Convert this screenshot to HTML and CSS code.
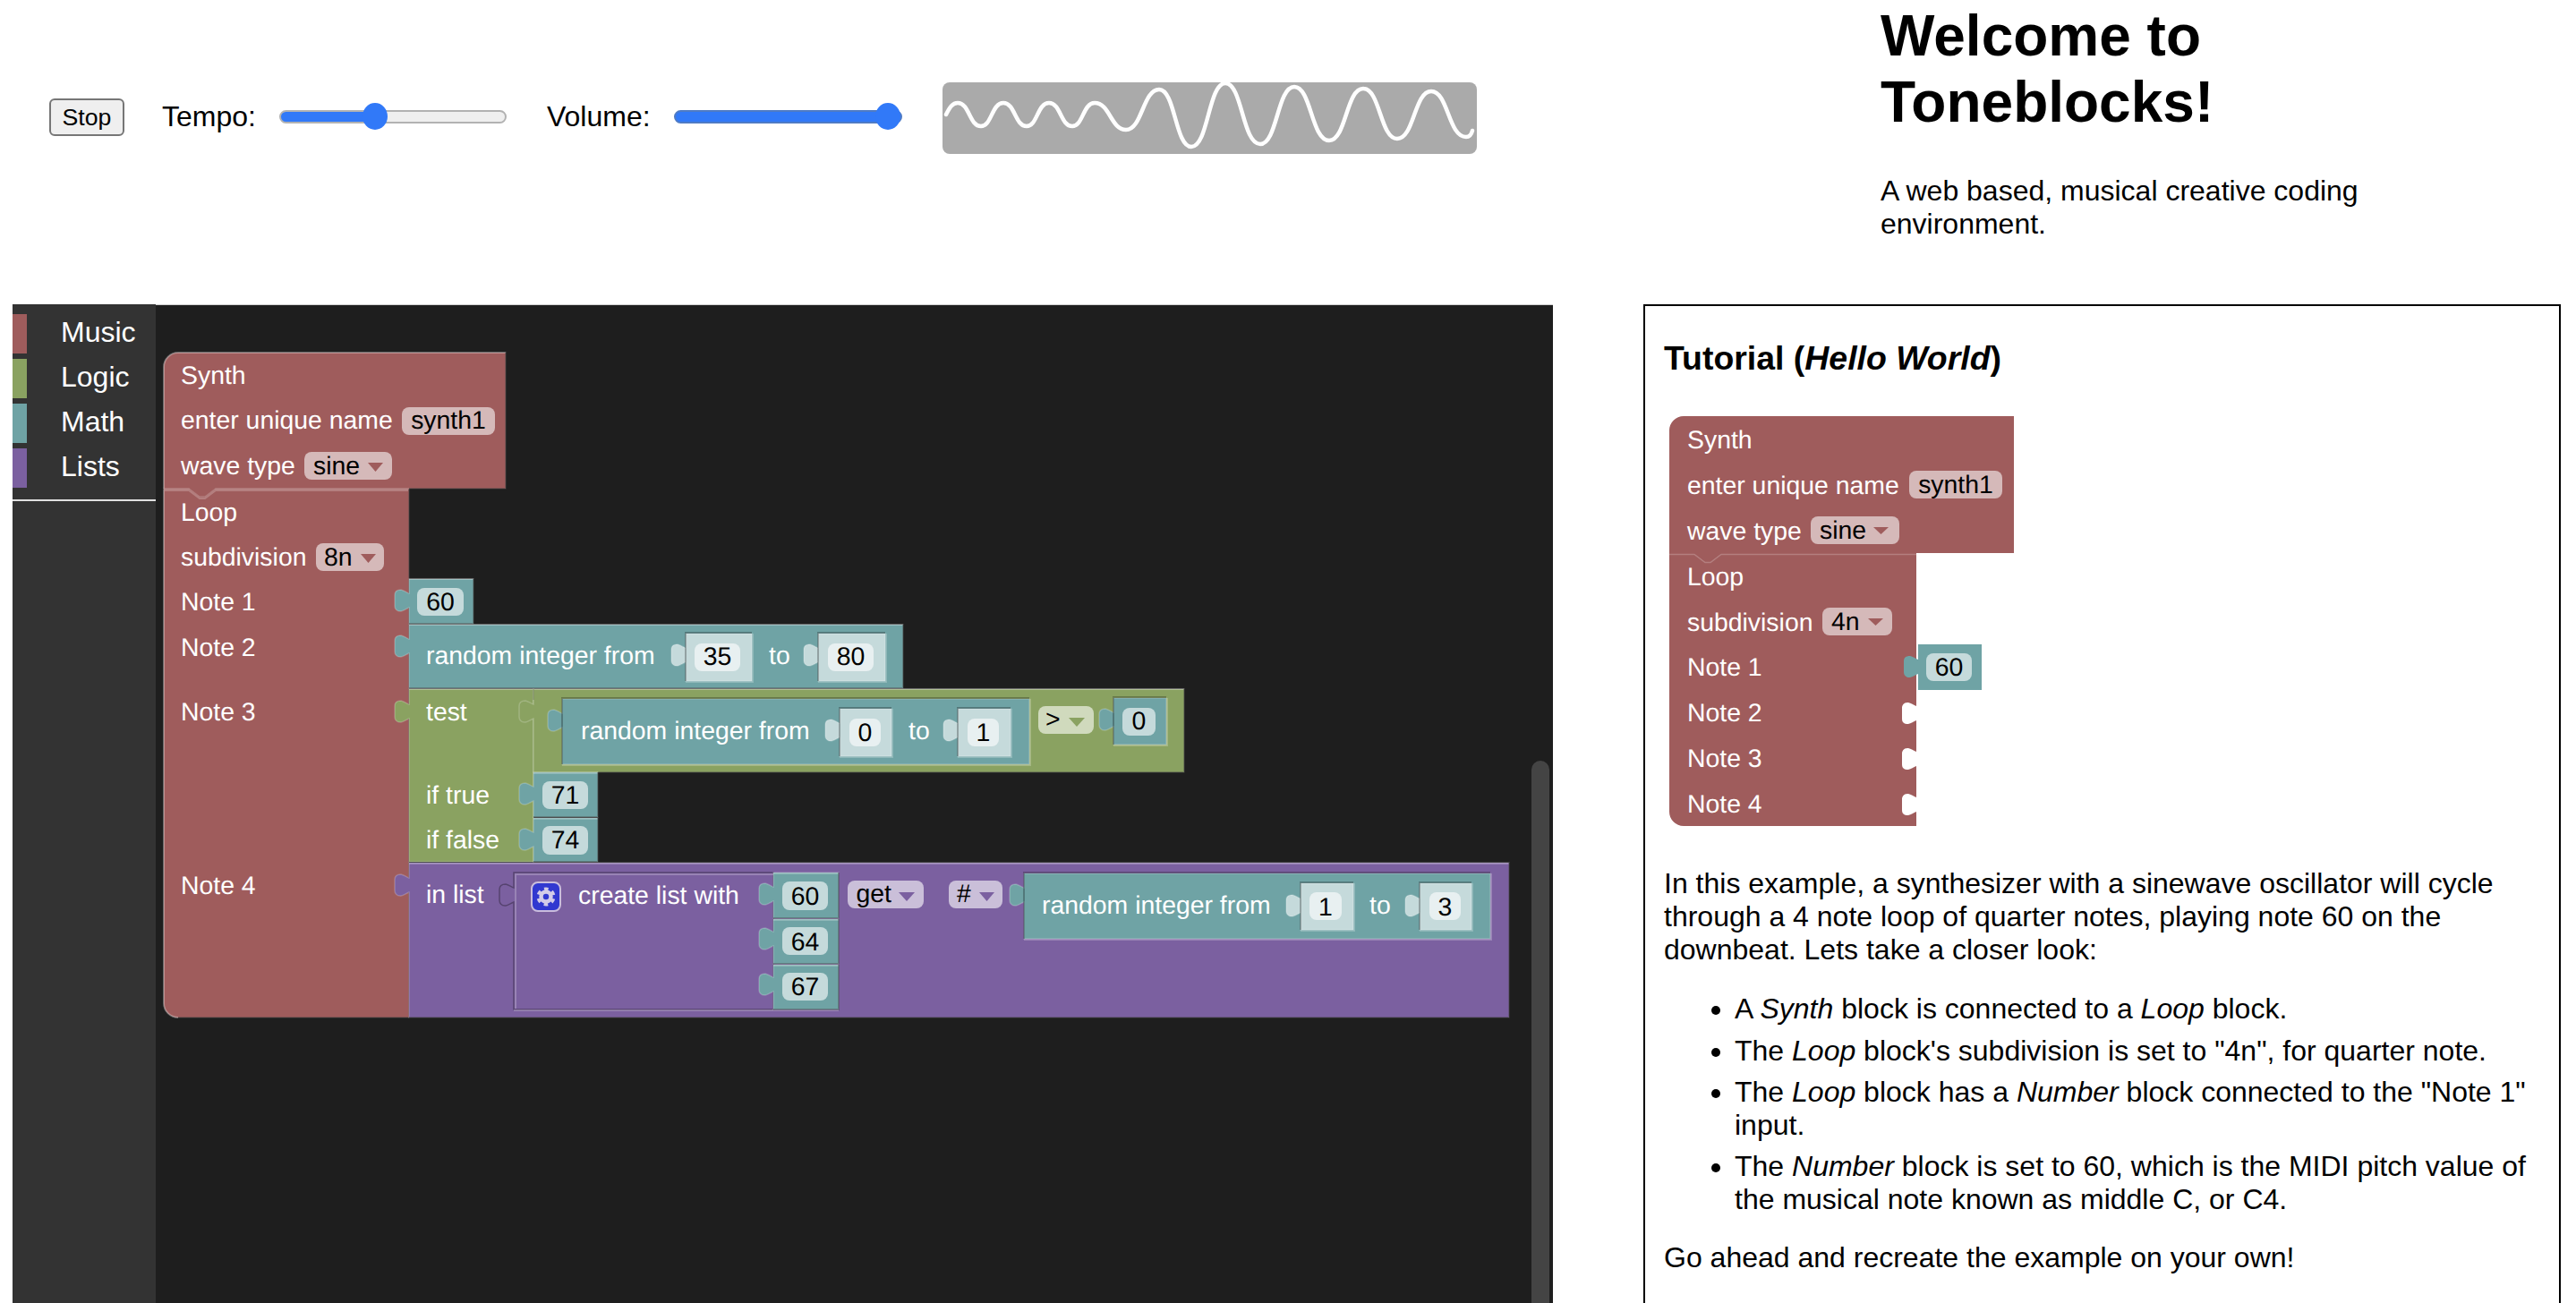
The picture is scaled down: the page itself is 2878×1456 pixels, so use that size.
FILE: index.html
```html
<!DOCTYPE html>
<html lang="en">
<head>
<meta charset="utf-8">
<title>Toneblocks</title>
<link rel="stylesheet" href="styles.css">
</head>
<body>
<div class="page">
  <header class="controls">
    <button class="stop">Stop</button>
    <div class="ctl">
      <label class="ctl-label">Tempo:</label>
      <input class="slider tempo" type="range" min="0" max="100" value="41">
    </div>
    <div class="ctl ctl-volume">
      <label class="ctl-label">Volume:</label>
      <input class="slider volume" type="range" min="0" max="100" value="100">
    </div>
    <svg class="scope" viewBox="1055 92 597 80">
      <path d="M1059,128 C1063,120 1066,115 1072,115 C1085,115 1085,141 1098,141 C1110,141 1110,115 1123,115 C1136,115 1136,141 1149,141 C1161,141 1161,115 1174,115 C1187,115 1187,141 1200,141 C1212,141 1212,115 1225,115 C1242,115 1243,145 1260,145 C1278,145 1279,100 1297,100 C1315,100 1315,164 1333,164 C1352,164 1352,93 1371,93 C1390,93 1390,161 1410,161 C1429,161 1429,97 1448,97 C1467,97 1467,157 1487,157 C1506,157 1506,99 1525,99 C1544,99 1544,155 1563,155 C1582,155 1582,102 1601,102 C1620,102 1620,153 1640,153 C1644,153 1646,150 1647,146"/>
    </svg>
  </header>

  <aside class="intro">
    <h1 class="intro-title">Welcome to Toneblocks!</h1>
    <p class="intro-text">A web based, musical creative coding environment.</p>
  </aside>

  <main class="workspace">
    <nav class="toolbox">
      <div class="cats">
        <div class="cat"><span class="stripe s-music"></span><span class="cat-name">Music</span></div>
        <div class="cat"><span class="stripe s-logic"></span><span class="cat-name">Logic</span></div>
        <div class="cat"><span class="stripe s-math"></span><span class="cat-name">Math</span></div>
        <div class="cat"><span class="stripe s-lists"></span><span class="cat-name">Lists</span></div>
      </div>
    </nav>
    <div class="canvas">
      <svg class="blocks" viewBox="174 340 1561 1116">
        <!-- Loop -->
        <path class="b music" d="M183,546 H457 V1137 H199 a16,16 0 0 1 -16,-16 Z"/>
        <path class="dk" d="M457,546 V1137 H199"/>
        <!-- Synth -->
        <path class="b music" d="M183,410 a16,16 0 0 1 16,-16 H565 V546 H241 l-12,9 h-6 l-12,-9 H183 Z"/>
        <path class="lt" d="M183,546 V410 a16,16 0 0 1 16,-16 H565"/>
        <path class="dk" d="M565,394 V546 H457"/>
        <path class="lt" d="M183,1121 V548 H211 l12,9 h6 l12,-9 H456"/>
        <path class="lt" d="M183,1121 a16,16 0 0 0 16,16" />
        <text class="bt" x="202" y="429">Synth</text>
        <text class="bt" x="202" y="479">enter unique name</text>
        <rect class="f-music" x="449" y="455" width="104" height="31" rx="8"/>
        <text class="ft mid" x="501" y="479">synth1</text>
        <text class="bt" x="202" y="530">wave type</text>
        <rect class="f-music" x="340" y="505" width="98" height="31" rx="8"/>
        <text class="ft" x="350" y="530">sine</text>
        <path class="arrow-music" d="M411,517 h17 l-8.500,10 Z"/>
        <text class="bt" x="202" y="582">Loop</text>
        <text class="bt" x="202" y="632">subdivision</text>
        <rect class="f-music" x="353" y="607" width="76" height="31" rx="8"/>
        <text class="ft" x="362" y="632">8n</text>
        <path class="arrow-music" d="M403,619 h17 l-8.500,10 Z"/>
        <text class="bt" x="202" y="682">Note 1</text>
        <text class="bt" x="202" y="733">Note 2</text>
        <text class="bt" x="202" y="805">Note 3</text>
        <text class="bt" x="202" y="999">Note 4</text>

        <!-- 60 -->
        <path class="b math" d="M457,647 H529 V697 H457 V679 c-3,1 -6,3.500 -9,4 c-5,.5 -7,-3 -7,-6 v-12 c0,-4 2,-6 7,-6 c3,.5 6,3 9,4 Z"/>
        <path class="lt" d="M457,647 H529"/><path class="dk" d="M529,647 V697 H457"/>
        <rect class="f-math" x="466" y="657" width="52" height="31" rx="8"/>
        <text class="ft mid" x="492" y="682">60</text>

        <!-- random 35..80 -->
        <path class="b math" d="M457,698 H1009 V769 H457 V730 c-3,1 -6,3.500 -9,4 c-5,.5 -7,-3 -7,-6 v-12 c0,-4 2,-6 7,-6 c3,.5 6,3 9,4 Z"/>
        <path class="lt" d="M457,698 H1009"/><path class="dk" d="M1009,698 V769 H457"/>
        <text class="bt" x="476" y="742">random integer from</text>
        <text class="bt" x="859" y="742">to</text>
        <path class="b shadow" d="M766,708 H840 V761 H766 V740 c-3,1 -6,3.500 -9,4 c-5,.5 -7,-3 -7,-6 v-12 c0,-4 2,-6 7,-6 c3,.5 6,3 9,4 Z"/>
        <path class="rim" d="M841,708 V762 H766"/><path class="hole" d="M766,761 V707 H840"/>
        <rect class="f-shadow" x="776" y="719" width="51" height="31" rx="8"/>
        <text class="ft mid" x="801.500" y="743">35</text>
        <path class="b shadow" d="M914,708 H989 V761 H914 V740 c-3,1 -6,3.500 -9,4 c-5,.5 -7,-3 -7,-6 v-12 c0,-4 2,-6 7,-6 c3,.5 6,3 9,4 Z"/>
        <path class="rim" d="M990,708 V762 H914"/><path class="hole" d="M914,761 V707 H989"/>
        <rect class="f-shadow" x="925" y="719" width="51" height="31" rx="8"/>
        <text class="ft mid" x="950.500" y="743">80</text>

        <!-- ternary -->
        <path class="b logic" d="M457,770 H596 V963 H457 V803 c-3,1 -6,3.500 -9,4 c-5,.5 -7,-3 -7,-6 v-12 c0,-4 2,-6 7,-6 c3,.5 6,3 9,4 Z"/>
        <path class="lt" d="M457,770 H596"/><path class="dk" d="M457,964 H596"/>
        <text class="bt" x="476" y="805">test</text>
        <text class="bt" x="476" y="898">if true</text>
        <text class="bt" x="476" y="948">if false</text>
        <!-- compare -->
        <path class="b logic" d="M596,770 H1323 V863 H596 V803 c-3,1 -6,3.500 -9,4 c-5,.5 -7,-3 -7,-6 v-12 c0,-4 2,-6 7,-6 c3,.5 6,3 9,4 Z"/>
        <path class="lt" d="M596,770 H1323"/><path class="dk" d="M1323,770 V863 H668"/>
        <path class="dk thin" d="M596,770 V782"/>
        <!-- random 0..1 -->
        <path class="b math" d="M628,781 H1150 V854 H628 V813 c-3,1 -6,3.500 -9,4 c-5,.5 -7,-3 -7,-6 v-12 c0,-4 2,-6 7,-6 c3,.5 6,3 9,4 Z"/>
        <path class="rim" d="M1151,781 V855 H628"/><path class="hole" d="M628,854 V780 H1150"/>
        <text class="bt" x="649" y="826">random integer from</text>
        <text class="bt" x="1015" y="826">to</text>
        <path class="b shadow" d="M938,792 H996 V845 H938 V824 c-3,1 -6,3.500 -9,4 c-5,.5 -7,-3 -7,-6 v-12 c0,-4 2,-6 7,-6 c3,.5 6,3 9,4 Z"/>
        <path class="rim" d="M997,792 V846 H938"/><path class="hole" d="M938,845 V791 H996"/>
        <rect class="f-shadow" x="949" y="803" width="35" height="31" rx="8"/>
        <text class="ft mid" x="966.500" y="828">0</text>
        <path class="b shadow" d="M1070,792 H1129 V845 H1070 V824 c-3,1 -6,3.500 -9,4 c-5,.5 -7,-3 -7,-6 v-12 c0,-4 2,-6 7,-6 c3,.5 6,3 9,4 Z"/>
        <path class="rim" d="M1130,792 V846 H1070"/><path class="hole" d="M1070,845 V791 H1129"/>
        <rect class="f-shadow" x="1081" y="803" width="35" height="31" rx="8"/>
        <text class="ft mid" x="1098.500" y="828">1</text>
        <!-- > -->
        <rect class="f-logic" x="1160" y="789" width="62" height="31" rx="8"/>
        <text class="ft" x="1168" y="813">&gt;</text>
        <path class="arrow-logic" d="M1194,802 h18 l-9,10 Z"/>
        <path class="b math" d="M1244,780 H1303 V832 H1244 V812 c-3,1 -6,3.500 -9,4 c-5,.5 -7,-3 -7,-6 v-12 c0,-4 2,-6 7,-6 c3,.5 6,3 9,4 Z"/>
        <path class="rim" d="M1304,780 V833 H1244"/><path class="hole" d="M1244,832 V779 H1303"/>
        <rect class="f-math" x="1254" y="791" width="37" height="31" rx="8"/>
        <text class="ft mid" x="1272.500" y="815">0</text>
        <!-- 71 / 74 -->
        <path class="b math" d="M596,863 H668 V913 H596 V895 c-3,1 -6,3.500 -9,4 c-5,.5 -7,-3 -7,-6 v-12 c0,-4 2,-6 7,-6 c3,.5 6,3 9,4 Z"/>
        <path class="lt" d="M596,864 H668"/><path class="dk" d="M668,863 V913 H596"/>
        <rect class="f-math" x="606" y="873" width="51" height="31" rx="8"/>
        <text class="ft mid" x="631.500" y="898">71</text>
        <path class="b math" d="M596,914 H668 V963 H596 V946 c-3,1 -6,3.500 -9,4 c-5,.5 -7,-3 -7,-6 v-12 c0,-4 2,-6 7,-6 c3,.5 6,3 9,4 Z"/>
        <path class="lt" d="M596,915 H668"/><path class="dk" d="M668,914 V963 H596"/>
        <rect class="f-math" x="606" y="923" width="51" height="32" rx="8"/>
        <text class="ft mid" x="631.500" y="948">74</text>

        <!-- get in list -->
        <path class="b lists" d="M457,964 H1686 V1137 H457 V997 c-3,1 -6,3.500 -9,4 c-5,.5 -7,-3 -7,-6 v-12 c0,-4 2,-6 7,-6 c3,.5 6,3 9,4 Z"/>
        <path class="lt" d="M457,965 H1686"/><path class="dk" d="M1686,964 V1137 H457"/>
        <text class="bt" x="476" y="1009">in list</text>
        <!-- create list -->
        <path class="b-hole lists" d="M574,975 H864 V1128 H574 V1008 c-3,1 -6,3.500 -9,4 c-5,.5 -7,-3 -7,-6 v-12 c0,-4 2,-6 7,-6 c3,.5 6,3 9,4 Z"/>
        <path class="rim" d="M574,1129 H937"/><path class="rim" d="M576,1127 V977 H864"/>
        <rect class="gear-box" x="594" y="986" width="32" height="32" rx="7"/>
        <circle class="gear-ring" cx="610" cy="1002" r="5.500"/>
        <circle class="gear-teeth" cx="610" cy="1002" r="8.500"/>
        <text class="bt" x="646" y="1010">create list with</text>
        <!-- 60 64 67 -->
        <path class="b math" d="M864,975 H937 V1026 H864 V1007 c-3,1 -6,3.500 -9,4 c-5,.5 -7,-3 -7,-6 v-12 c0,-4 2,-6 7,-6 c3,.5 6,3 9,4 Z"/>
        <path class="lt" d="M864,976 H937"/><path class="dk" d="M937,975 V1026 H864"/>
        <rect class="f-math" x="874" y="985" width="51" height="32" rx="8"/>
        <text class="ft mid" x="899.500" y="1011">60</text>
        <path class="b math" d="M864,1027 H937 V1077 H864 V1057 c-3,1 -6,3.500 -9,4 c-5,.5 -7,-3 -7,-6 v-12 c0,-4 2,-6 7,-6 c3,.5 6,3 9,4 Z"/>
        <path class="lt" d="M864,1028 H937"/><path class="dk" d="M937,1027 V1077 H864"/>
        <rect class="f-math" x="874" y="1036" width="51" height="31" rx="8"/>
        <text class="ft mid" x="899.500" y="1062">64</text>
        <path class="b math" d="M864,1078 H937 V1128 H864 V1108 c-3,1 -6,3.500 -9,4 c-5,.5 -7,-3 -7,-6 v-12 c0,-4 2,-6 7,-6 c3,.5 6,3 9,4 Z"/>
        <path class="lt" d="M864,1079 H937"/><path class="dk" d="M937,1078 V1128 H864"/>
        <rect class="f-math" x="874" y="1087" width="51" height="31" rx="8"/>
        <text class="ft mid" x="899.500" y="1112">67</text>
        <!-- get / # -->
        <rect class="f-lists" x="947" y="984" width="85" height="31" rx="8"/>
        <text class="ft" x="956.500" y="1008">get</text>
        <path class="arrow-lists" d="M1004,997 h18 l-9,10 Z"/>
        <rect class="f-lists" x="1060" y="984" width="60" height="31" rx="8"/>
        <text class="ft" x="1069" y="1008">#</text>
        <path class="arrow-lists" d="M1094,997 h17 l-8.500,10 Z"/>
        <!-- random 1..3 -->
        <path class="b math" d="M1144,976 H1665 V1049 H1144 V1008 c-3,1 -6,3.500 -9,4 c-5,.5 -7,-3 -7,-6 v-12 c0,-4 2,-6 7,-6 c3,.5 6,3 9,4 Z"/>
        <path class="rim" d="M1666,976 V1050 H1144"/><path class="hole" d="M1144,1049 V975 H1665"/>
        <text class="bt" x="1164" y="1021">random integer from</text>
        <text class="bt" x="1530" y="1021">to</text>
        <path class="b shadow" d="M1453,987 H1512 V1039 H1453 V1020 c-3,1 -6,3.500 -9,4 c-5,.5 -7,-3 -7,-6 v-12 c0,-4 2,-6 7,-6 c3,.5 6,3 9,4 Z"/>
        <path class="rim" d="M1513,987 V1040 H1453"/><path class="hole" d="M1453,1039 V986 H1512"/>
        <rect class="f-shadow" x="1463" y="997" width="36" height="31" rx="8"/>
        <text class="ft mid" x="1481" y="1023">1</text>
        <path class="b shadow" d="M1586,987 H1644 V1039 H1586 V1020 c-3,1 -6,3.500 -9,4 c-5,.5 -7,-3 -7,-6 v-12 c0,-4 2,-6 7,-6 c3,.5 6,3 9,4 Z"/>
        <path class="rim" d="M1645,987 V1040 H1586"/><path class="hole" d="M1586,1039 V986 H1644"/>
        <rect class="f-shadow" x="1597" y="997" width="35" height="31" rx="8"/>
        <text class="ft mid" x="1614.500" y="1023">3</text>
      </svg>
      <div class="scrollbar"></div>
    </div>
  </main>

  <section class="tutorial">
    <h3 class="tut-title">Tutorial (<em>Hello World</em>)</h3>
    <svg class="example" viewBox="0 0 385 458">
      <path class="flat music" d="M0,153 H276 V324 c-3,-1 -6,-3.500 -9,-4 c-5,-.5 -7,3 -7,6 v12 c0,4 2,6 7,6 c3,-.5 6,-3 9,-4 V375 c-3,-1 -6,-3.500 -9,-4 c-5,-.5 -7,3 -7,6 v12 c0,4 2,6 7,6 c3,-.5 6,-3 9,-4 V426 c-3,-1 -6,-3.500 -9,-4 c-5,-.5 -7,3 -7,6 v12 c0,4 2,6 7,6 c3,-.5 6,-3 9,-4 V458 H16 a16,16 0 0 1 -16,-16 Z"/>
      <path class="flat music" d="M0,16 a16,16 0 0 1 16,-16 H385 V153 H58 l-12,9 h-6 l-12,-9 H0 Z"/>
      <path class="flat-lt" d="M0,154.500 H28 l12,9 h6 l12,-9 H276"/>
      <text class="bt" x="20" y="36">Synth</text>
      <text class="bt" x="20" y="87">enter unique name</text>
      <rect class="f-music" x="268" y="61" width="104" height="31" rx="8"/>
      <text class="ft mid" x="320" y="86">synth1</text>
      <text class="bt" x="20" y="138">wave type</text>
      <rect class="f-music" x="158" y="112" width="99" height="31" rx="8"/>
      <text class="ft" x="168" y="137">sine</text>
      <path class="arrow-music" d="M228,124 h17 l-8.500,8 Z"/>
      <text class="bt" x="20" y="189">Loop</text>
      <text class="bt" x="20" y="240">subdivision</text>
      <rect class="f-music" x="171" y="214" width="78" height="31" rx="8"/>
      <text class="ft" x="181" y="239">4n</text>
      <path class="arrow-music" d="M222,226 h17 l-8.500,8 Z"/>
      <text class="bt" x="20" y="290">Note 1</text>
      <text class="bt" x="20" y="341">Note 2</text>
      <text class="bt" x="20" y="392">Note 3</text>
      <text class="bt" x="20" y="443">Note 4</text>
      <path class="flat math" d="M278,255 H349 V306 H278 V288 c-3,1 -6,3.500 -9,4 c-5,.5 -7,-3 -7,-6 v-12 c0,-4 2,-6 7,-6 c3,.5 6,3 9,4 Z"/>
      <rect class="f-math" x="287" y="265" width="51" height="31" rx="8"/>
      <text class="ft mid" x="312.500" y="290">60</text>
    </svg>
    <p class="tut-p">In this example, a synthesizer with a sinewave oscillator will cycle through a 4 note loop of quarter notes, playing note 60 on the downbeat. Lets take a closer look:</p>
    <ul class="tut-list">
      <li>A <em>Synth</em> block is connected to a <em>Loop</em> block.</li>
      <li>The <em>Loop</em> block's subdivision is set to "4n", for quarter note.</li>
      <li>The <em>Loop</em> block has a <em>Number</em> block connected to the "Note 1" input.</li>
      <li>The <em>Number</em> block is set to 60, which is the MIDI pitch value of the musical note known as middle C, or C4.</li>
    </ul>
    <p class="tut-p">Go ahead and recreate the example on your own!</p>
  </section>
</div>
</body>
</html>
```
FILE: styles.css
```css
* { box-sizing: border-box; }
html, body { margin: 0; height: 100%; background: #fff; }
body { font-family: "Liberation Sans", Arial, sans-serif; font-size: 32px; color: #000; overflow: hidden; }

.page {
  display: grid;
  grid-template-columns: 1836px 1fr;
  grid-template-rows: 340px 1116px;
  height: 1456px;
  overflow: hidden;
}

/* top controls */
.controls { display: flex; align-items: center; gap: 44px; padding: 92px 0 168px 55px; }
.stop {
  width: 84px; height: 42px; padding: 0;
  font: 26.67px "Liberation Sans", Arial, sans-serif; color: #000;
  background: #efefef; border: 2px solid #767676; border-radius: 6px;
  margin-top: -2px; margin-right: -2px;
}
.ctl { display: flex; align-items: center; gap: 26px; margin-top: -4px; }
.ctl-volume { margin-left: 1px; }
.ctl-label { line-height: 37px; }
.slider {
  -webkit-appearance: none; appearance: none;
  width: 254px; height: 15px; margin: 0;
  border: 2px solid #b2b2b2; border-radius: 8px; background: #efefef;
}
.slider::-webkit-slider-thumb {
  -webkit-appearance: none; appearance: none;
  width: 28px; height: 30px; border-radius: 50%; background: #3179f8; border: 0;
}
.tempo { background: linear-gradient(to right, #3179f8 40%, #efefef 40%); }
.volume { width: 255px; border-color: #4f7bc4; background: #3179f8; }
.scope { width: 597px; height: 80px; margin-left: 1px; background: #aaa; border-radius: 8px; flex: none; }
.scope path { fill: none; stroke: #fff; stroke-width: 4.5; stroke-linecap: round; }

/* intro */
.intro { padding: 3px 0 0 265px; width: 960px; }
.intro-title { margin: 0; font-size: 64px; line-height: 74px; font-weight: 700; width: 600px; }
.intro-text { margin: 43.5px 0 0; line-height: 37px; width: 640px; }

/* workspace */
.workspace { display: flex; margin-left: 14px; width: 1721px; min-height: 0; }
.toolbox { width: 160px; background: #333; flex: none; color: #fff; }
.cats { height: 220px; padding-top: 8px; border-bottom: 2px solid #e0e0e0; }
.cat { display: flex; align-items: center; height: 50px; gap: 38px; }
.stripe { width: 16px; height: 44px; }
.s-music { background: #9f5c5c; }
.s-logic { background: #8aa261; }
.s-math { background: #6fa3a5; }
.s-lists { background: #7b60a0; }
.cat-name { font-size: 32px; line-height: 37px; margin-bottom: 4px; }
.canvas { position: relative; flex: 1; background: #1e1e1e; border-top: 1px solid #cfcfcf; overflow: hidden; }
.blocks { position: absolute; left: 0; top: -1px; width: 1561px; height: 1116px; }
.scrollbar { position: absolute; right: 4px; top: 509px; bottom: 0; width: 20px; background: #444; border-radius: 10px 10px 0 0; }

/* blocks */
.b { stroke: rgba(255,255,255,.2); stroke-width: 1.5; }
.b-hole { stroke: rgba(0,0,0,.3); stroke-width: 1.5; }
.music { fill: #9f5c5c; }
.logic { fill: #8aa261; }
.math { fill: #6fa3a5; }
.lists { fill: #7b60a0; }
.shadow { fill: #c5dadb; }
.lt, .dk, .rim, .hole, .flat-lt { fill: none; stroke-width: 2; }
.lt { stroke: rgba(255,255,255,.22); }
.dk { stroke: rgba(0,0,0,.28); }
.dk.thin { stroke-width: 1; }
.rim { stroke: rgba(255,255,255,.22); }
.hole { stroke: rgba(0,0,0,.26); }
.flat-lt { stroke: rgba(255,255,255,.22); stroke-width: 1.5; }
.bt, .ft { font-family: "Liberation Sans", Arial, sans-serif; font-size: 28.4px; text-rendering: geometricPrecision; }
.bt { fill: #fff; }
.ft { fill: #000; }
.mid { text-anchor: middle; }
.f-music { fill: #d5b9b9; }
.f-math { fill: #c5dadb; }
.f-shadow { fill: #e8f0f1; }
.f-logic { fill: #d0dabd; }
.f-lists { fill: #cabfd9; }
.arrow-music { fill: #9f5c5c; }
.arrow-logic { fill: #8aa261; }
.arrow-lists { fill: #7b60a0; }
.gear-box { fill: #3138d0; stroke: #c9bddc; stroke-width: 2; }
.gear-ring { fill: none; stroke: #d3cce8; stroke-width: 4.5; }
.gear-teeth { fill: none; stroke: #d3cce8; stroke-width: 4; stroke-dasharray: 4.45 4.45; stroke-dashoffset: -2.22; }

/* tutorial */
.tutorial {
  width: 1025px; height: 1300px;
  padding: 0 21px;
  border: 2px solid #000;
}
.tut-title { margin: 37px 0 0; font-size: 37.44px; line-height: 43px; }
.example { display: block; width: 385px; height: 458px; margin: 43px 0 0 6px; overflow: visible; }
.tut-p { margin: 46px 0 0; line-height: 36.8px; }
.tut-list { margin: 30px 0 0; padding-left: 79px; line-height: 36.8px; }
.tut-list li { margin-bottom: 9.5px; }
.tut-list + .tut-p { margin-top: 28px; }
```
